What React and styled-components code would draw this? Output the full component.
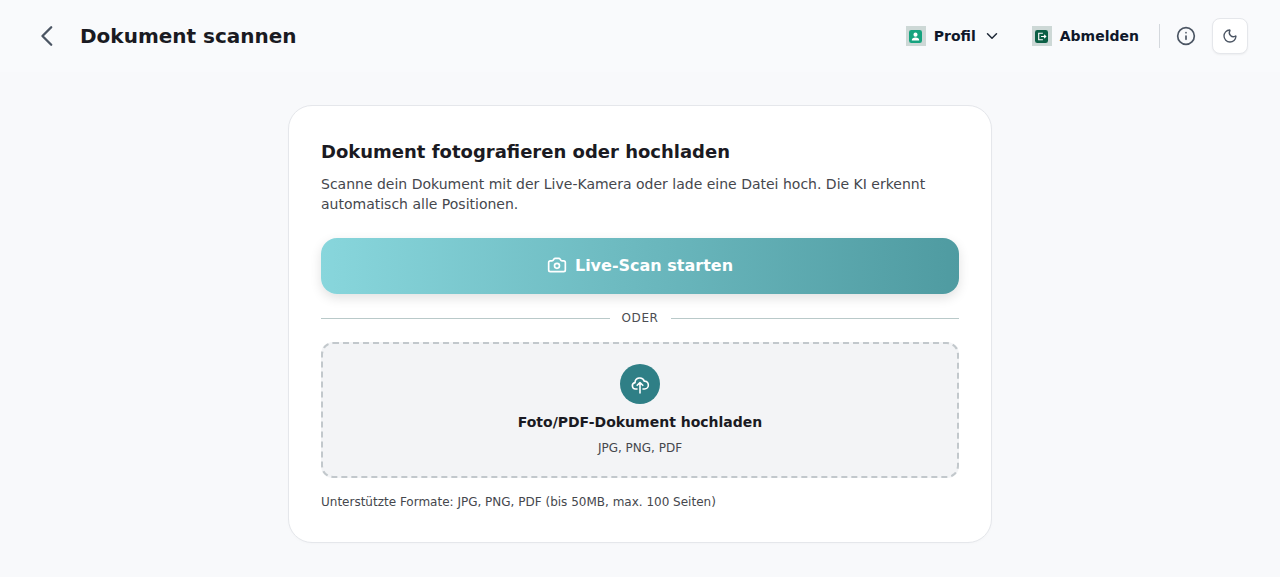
import React from 'react';
import styled, { createGlobalStyle } from 'styled-components';
import { ChevronDown, Info, Moon, Camera } from 'lucide-react';

const GlobalStyle = createGlobalStyle`
  html, body {
    margin: 0;
    padding: 0;
    background: #f8f9fb;
  }
  * {
    box-sizing: border-box;
  }
  body {
    font-family: "DejaVu Sans", sans-serif;
    color: #18181b;
  }
`;

const Page = styled.div`
  min-height: 577px;
  display: flex;
  flex-direction: column;
  background: #f8f9fb;
`;

const Header = styled.header`
  height: 72px;
  padding: 0 32px;
  background: #f9fafc;
  display: flex;
  align-items: center;
  justify-content: space-between;
`;

const HeaderLeft = styled.div`
  display: flex;
  align-items: center;
  gap: 16px;
`;

const BackButton = styled.button`
  width: 32px;
  height: 32px;
  padding: 0;
  border: 0;
  background: none;
  color: #4b5563;
  display: flex;
  align-items: center;
  justify-content: center;
`;

const Title = styled.h1`
  margin: 0;
  font-size: 20px;
  font-weight: 700;
  color: #1a1a22;
`;

const HeaderRight = styled.div`
  display: flex;
  align-items: center;
`;

const NavItem = styled.button`
  display: flex;
  align-items: center;
  gap: 8px;
  padding: 0;
  margin-right: ${props => props.$gap || 0}px;
  border: 0;
  background: none;
  font-family: inherit;
  font-size: 14px;
  font-weight: 700;
  color: #0f172a;
`;

const NavIconBox = styled.span`
  width: 20px;
  height: 20px;
  background: #cdd8d6;
  display: flex;
  align-items: center;
  justify-content: center;
`;

const Caret = styled(ChevronDown)`
  margin-left: -1px;
  color: #1f2937;
`;

const Separator = styled.div`
  width: 1px;
  height: 24px;
  background: #d4d8dd;
  margin: 0 14px 0 20px;
`;

const IconButton = styled.button`
  width: 24px;
  height: 24px;
  padding: 0;
  border: 0;
  background: none;
  color: #4b5563;
  display: flex;
  align-items: center;
  justify-content: center;
  margin-right: 14px;
`;

const ThemeButton = styled.button`
  width: 36px;
  height: 36px;
  padding: 0;
  border: 1px solid #e5e7eb;
  border-radius: 8px;
  background: #fff;
  color: #4b5563;
  box-shadow: 0 1px 2px rgba(0, 0, 0, 0.05);
  display: flex;
  align-items: center;
  justify-content: center;
`;

const Main = styled.main`
  display: flex;
  justify-content: center;
  padding-top: 33px;
`;

const Card = styled.section`
  width: 704px;
  height: 438px;
  padding: 32px;
  background: #fff;
  border: 1px solid #e5e7eb;
  border-radius: 24px;
  box-shadow: 0 1px 3px rgba(0, 0, 0, 0.02);
`;

const CardTitle = styled.h2`
  margin: 0 0 8px;
  font-size: 18px;
  line-height: 28px;
  font-weight: 700;
  color: #1a1a22;
`;

const CardText = styled.p`
  margin: 0 0 24px;
  font-size: 14px;
  line-height: 20px;
  color: #45474d;
`;

const ScanButton = styled.button`
  width: 100%;
  height: 56px;
  padding: 0 0 2px;
  border: 0;
  border-radius: 16px;
  background: linear-gradient(90deg, #88d6dc 0%, #4f9ba1 100%);
  box-shadow: 0 4px 12px rgba(0, 0, 0, 0.12);
  color: #fff;
  font-family: inherit;
  font-size: 16px;
  font-weight: 700;
  display: flex;
  align-items: center;
  justify-content: center;
  gap: 8px;
`;

const Divider = styled.div`
  display: flex;
  align-items: center;
  gap: 12px;
  margin: 16px 0;
  height: 16px;
  font-size: 12px;
  letter-spacing: 0.6px;
  color: #4b4d52;
  &::before,
  &::after {
    content: '';
    flex: 1;
    height: 1px;
    background: #b9c9c9;
  }
`;

const DropZone = styled.div`
  height: 136px;
  border: 2px dashed #c2c8cc;
  border-radius: 12px;
  background: #f3f4f6;
  display: flex;
  flex-direction: column;
  align-items: center;
  padding-top: 20px;
`;

const UploadCircle = styled.span`
  width: 40px;
  height: 40px;
  border-radius: 50%;
  background: #2f7f86;
  color: #fff;
  display: flex;
  align-items: center;
  justify-content: center;
  margin-bottom: 8px;
`;

const DropTitle = styled.div`
  margin: 0 0 8px;
  font-size: 14px;
  line-height: 20px;
  font-weight: 700;
  color: #1a1a22;
`;

const DropHint = styled.div`
  font-size: 12px;
  line-height: 16px;
  color: #45474d;
`;

const Note = styled.p`
  margin: 16px 0 0;
  font-size: 12px;
  line-height: 16px;
  color: #45474d;
`;

const BackGlyph = () => (
  <svg width="28" height="28" viewBox="0 0 24 24" fill="none" stroke="currentColor" strokeWidth="2" strokeLinecap="round" strokeLinejoin="round">
    <path d="M14.75 19.5 7.25 12l7.5-7.5" />
  </svg>
);

const ProfileGlyph = () => (
  <svg width="13" height="13" viewBox="0 0 14 14">
    <rect width="14" height="14" rx="2.5" fill="#16a37f" />
    <circle cx="7" cy="5" r="2.2" fill="#fff" />
    <path d="M3 11.2c0-2 1.6-3 4-3s4 1 4 3z" fill="#fff" />
  </svg>
);

const LogoutGlyph = () => (
  <svg width="13" height="13" viewBox="0 0 14 14">
    <rect width="14" height="14" rx="2.5" fill="#0b5f45" />
    <path d="M8.5 3.5H4v7h4.5" fill="none" stroke="#fff" strokeWidth="1.2" />
    <path d="M6.5 7h5M9.8 5.2 11.6 7 9.8 8.8" fill="none" stroke="#fff" strokeWidth="1.2" />
  </svg>
);

const UploadGlyph = () => (
  <svg width="20" height="20" viewBox="0 0 20 20" fill="none" stroke="currentColor" strokeWidth="1.6" strokeLinecap="round" strokeLinejoin="round">
    <path d="M7 15H5.5a3.2 3.2 0 0 1-.5-6.35A4.8 4.8 0 0 1 14.3 7.1a3.9 3.9 0 0 1 .2 7.9H13" />
    <path d="M10 19V8.5M7.2 11.3 10 8.5l2.8 2.8" />
  </svg>
);

export default function App() {
  return (
    <Page>
      <GlobalStyle />
      <Header>
        <HeaderLeft>
          <BackButton><BackGlyph /></BackButton>
          <Title>Dokument scannen</Title>
        </HeaderLeft>
        <HeaderRight>
          <NavItem $gap={31}>
            <NavIconBox><ProfileGlyph /></NavIconBox>
            Profil
            <Caret size={18} strokeWidth={2} />
          </NavItem>
          <NavItem>
            <NavIconBox><LogoutGlyph /></NavIconBox>
            Abmelden
          </NavItem>
          <Separator />
          <IconButton><Info size={20} strokeWidth={2} /></IconButton>
          <ThemeButton><Moon size={16} strokeWidth={2} /></ThemeButton>
        </HeaderRight>
      </Header>
      <Main>
        <Card>
          <CardTitle>Dokument fotografieren oder hochladen</CardTitle>
          <CardText>
            Scanne dein Dokument mit der Live-Kamera oder lade eine Datei hoch. Die KI erkennt automatisch alle Positionen.
          </CardText>
          <ScanButton>
            <Camera size={20} strokeWidth={2} />
            Live-Scan starten
          </ScanButton>
          <Divider>ODER</Divider>
          <DropZone>
            <UploadCircle><UploadGlyph /></UploadCircle>
            <DropTitle>Foto/PDF-Dokument hochladen</DropTitle>
            <DropHint>JPG, PNG, PDF</DropHint>
          </DropZone>
          <Note>Unterstützte Formate: JPG, PNG, PDF (bis 50MB, max. 100 Seiten)</Note>
        </Card>
      </Main>
    </Page>
  );
}
